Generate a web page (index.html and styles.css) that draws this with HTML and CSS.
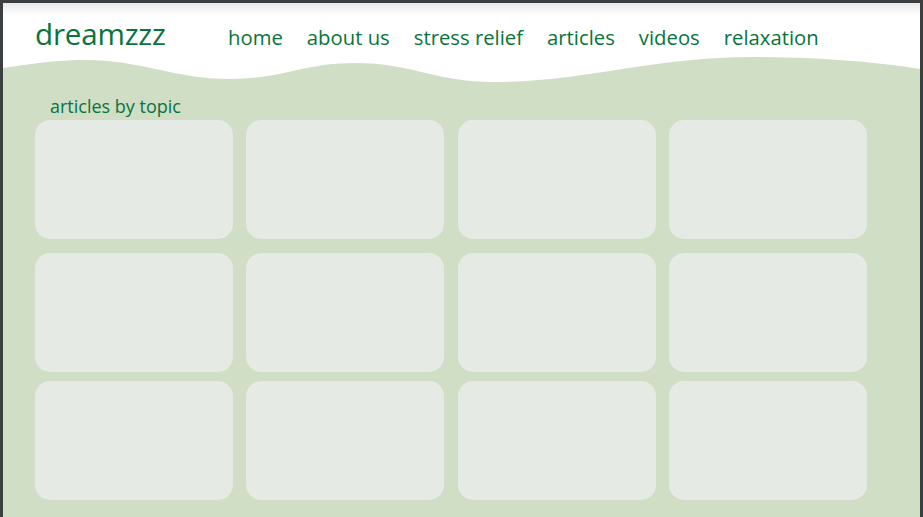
FILE: index.html
```html
<!DOCTYPE html>
<html lang="en">
<head>
<meta charset="utf-8">
<title>dreamzzz</title>
<link rel="stylesheet" href="styles.css">
</head>
<body>
<div class="frame">
  <header class="site-header">
    <div class="logo">dreamzzz</div>
    <nav class="nav">
      <a href="#">home</a>
      <a href="#">about us</a>
      <a href="#">stress relief</a>
      <a href="#">articles</a>
      <a href="#">videos</a>
      <a href="#">relaxation</a>
    </nav>
  </header>
  <svg class="wave" viewBox="0 0 917 30" preserveAspectRatio="none" aria-hidden="true">
    <path d="M0,15 C40,9 60,7 82,7 C140,7 170,26 227,26 C280,26 300,10 352,10 C410,10 430,29 492,29 C580,29 650,4 750,4 C820,4 880,10 917,16 L917,0 L0,0 Z" fill="#ffffff"/>
  </svg>
  <main class="content">
    <h2 class="section-title">articles by topic</h2>
    <div class="grid">
      <div class="card"></div><div class="card"></div><div class="card"></div><div class="card"></div>
    </div>
    <div class="grid row-2">
      <div class="card"></div><div class="card"></div><div class="card"></div><div class="card"></div>
    </div>
    <div class="grid row-3">
      <div class="card"></div><div class="card"></div><div class="card"></div><div class="card"></div>
    </div>
  </main>
</div>
</body>
</html>
```
FILE: styles.css
```css
html, body {
  margin: 0;
  padding: 0;
  height: 100%;
}
body {
  background: #3c3f42;
  font-family: "Open Sans", "Liberation Sans", sans-serif;
  overflow: hidden;
}
.frame {
  margin: 3px 3px 0 3px;
  height: calc(100% - 3px);
  background: #cfdec5;
  display: flex;
  flex-direction: column;
}
.site-header {
  background: linear-gradient(#e9e9e9 0px, #ffffff 12px);
  height: 50px;
  padding: 0 0 0 32px;
  display: flex;
  align-items: baseline;
}
.logo {
  flex: 0 0 auto;
  width: 193px;
  font-size: 29.6px;
  line-height: 1;
  color: #08743c;
  margin-top: 16px;
  letter-spacing: -0.2px;
}
.nav {
  display: flex;
  gap: 24px;
}
.nav a {
  font-size: 20.3px;
  line-height: 1;
  color: #08743c;
  text-decoration: none;
}
.wave {
  display: block;
  width: 100%;
  height: 30px;
  background: #cfdec5;
}
.content {
  padding: 0 0 0 32px;
}
.section-title {
  margin: 14px 0 5px 15px;
  font-size: 18px;
  line-height: 1;
  font-weight: normal;
  color: #08743c;
}
.grid {
  display: grid;
  grid-template-columns: repeat(4, 198px);
  column-gap: 13.33px;
}
.row-2 {
  margin-top: 14px;
}
.row-3 {
  margin-top: 9px;
}
.card {
  height: 119px;
  background: #e5eae4;
  border-radius: 15px;
}
```
